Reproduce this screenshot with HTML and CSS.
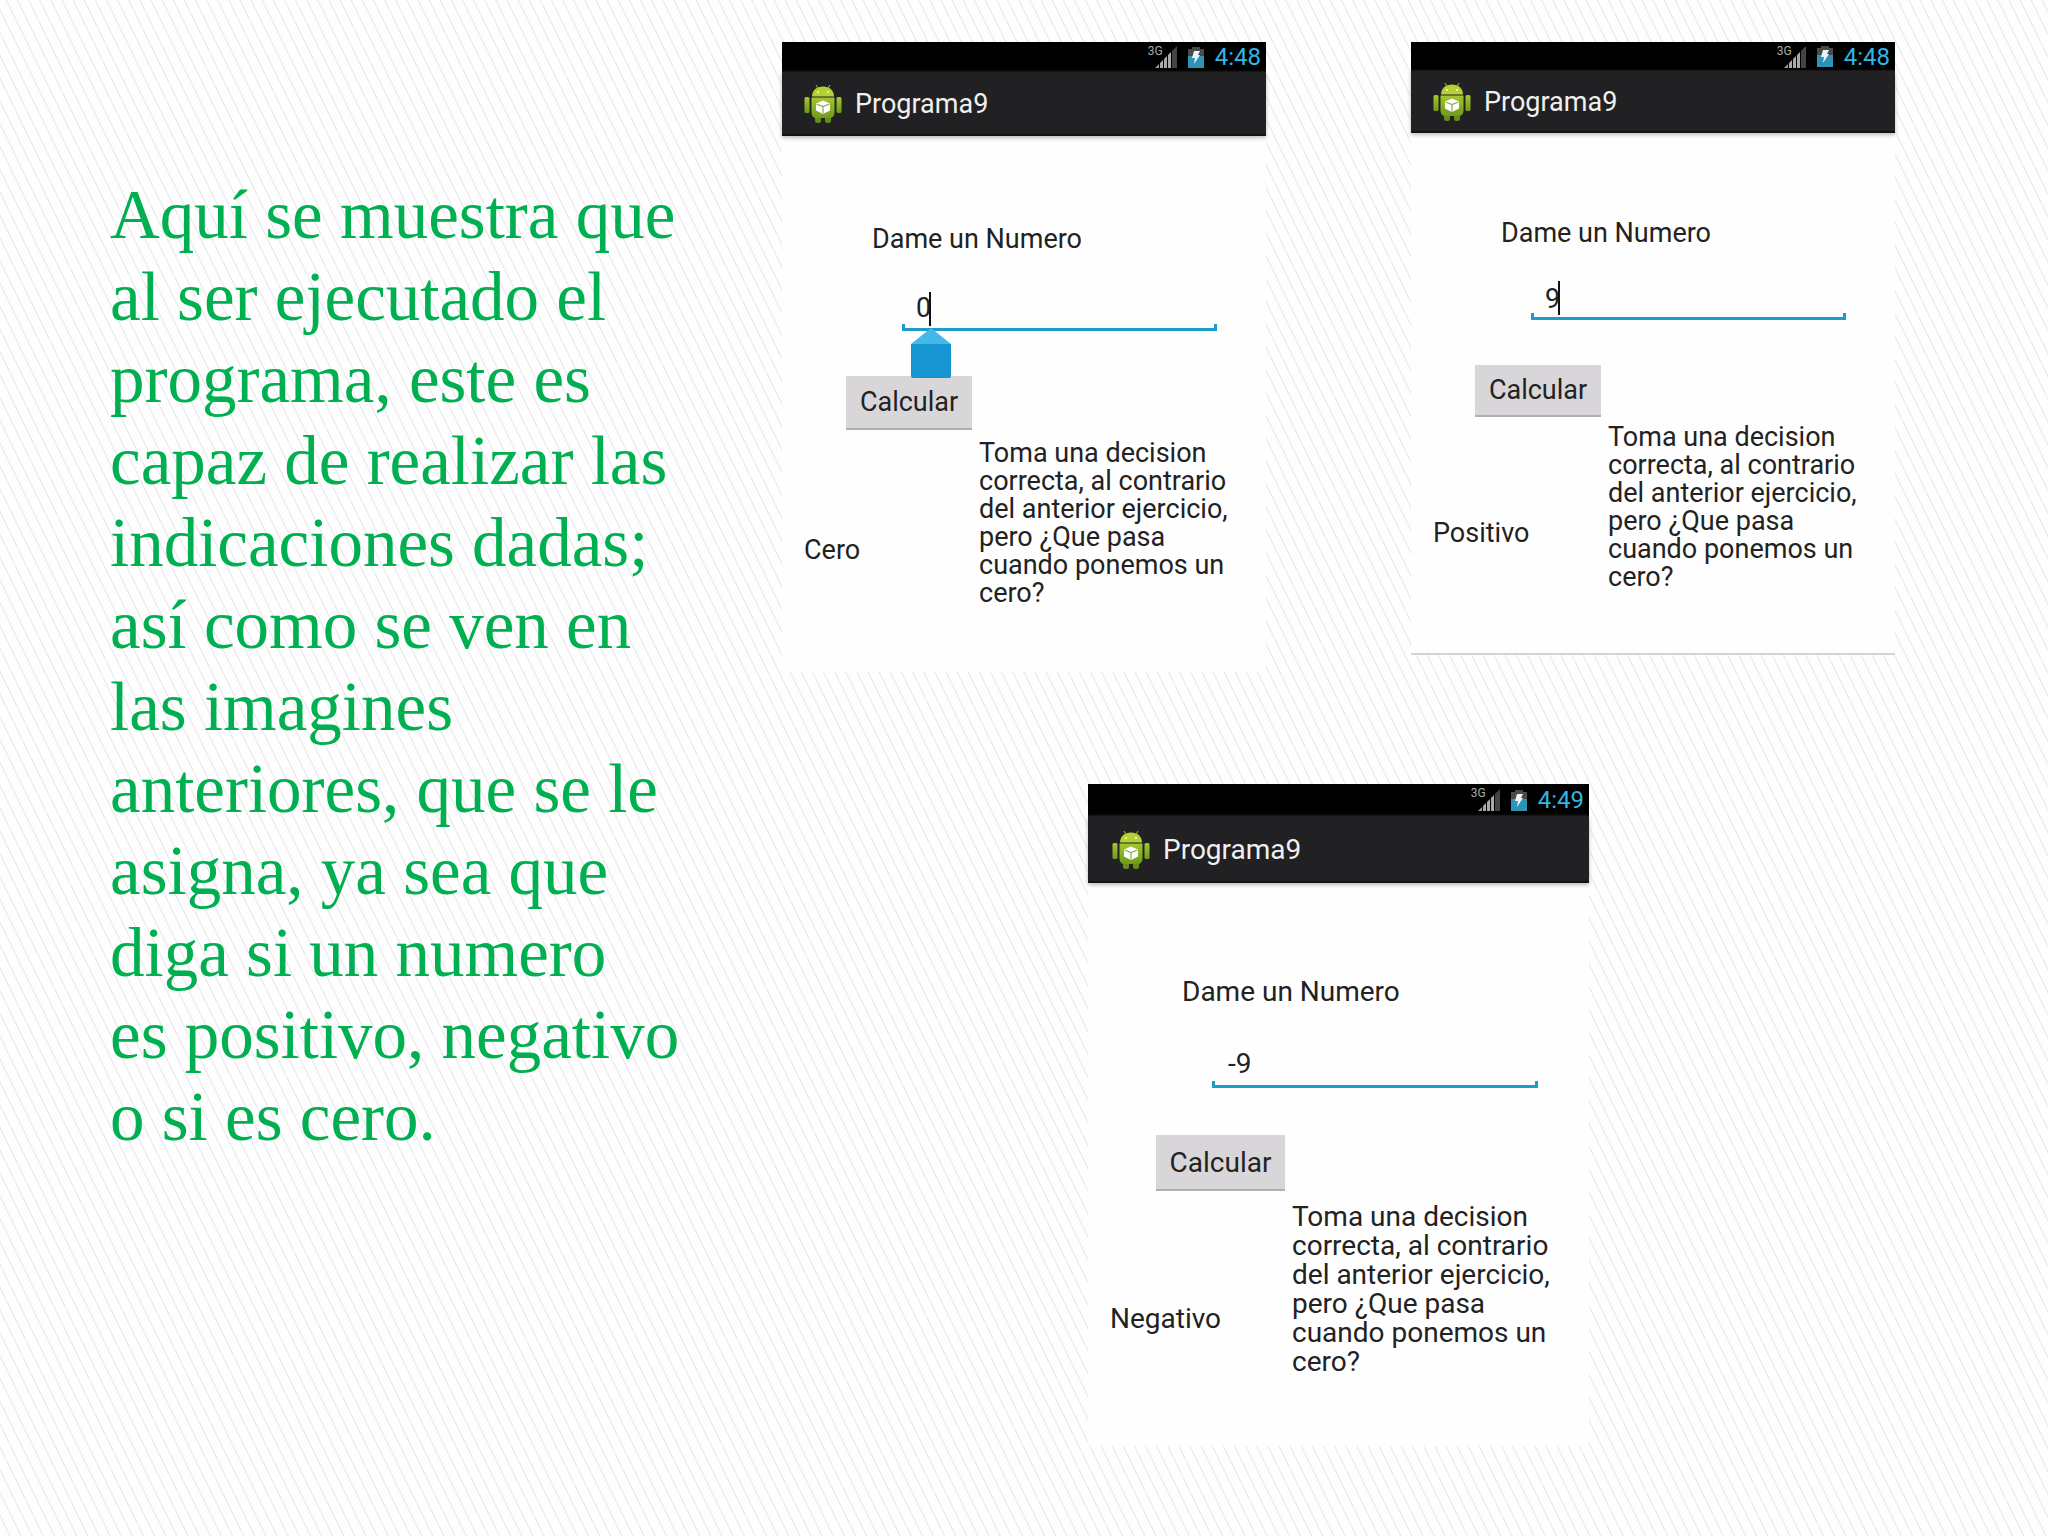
FILE: index.html
```html
<!DOCTYPE html>
<html lang="es">
<head>
<meta charset="UTF-8">
<meta name="viewport" content="width=device-width, initial-scale=1.0">
<title>Programa9</title>
<link rel="stylesheet" href="styles.css">
</head>
<body>

<!-- shared icons -->
<svg class="defs" width="0" height="0" aria-hidden="true">
  <defs>
    <linearGradient id="green" x1="0" y1="0" x2="0" y2="1">
      <stop offset="0" stop-color="#a5c532"/>
      <stop offset="1" stop-color="#6f9a1c"/>
    </linearGradient>
    <symbol id="robot" viewBox="0 0 38 40">
      <path d="M12 1l3 5M26 1l-3 5" stroke="#86a82a" stroke-width="1.2"/>
      <path d="M8 12.5C8 6 13 2.5 19 2.5S30 6 30 12.5z" fill="#b3d135"/>
      <circle cx="14" cy="8" r="1" fill="#f4f8dc"/>
      <circle cx="24" cy="8" r="1" fill="#f4f8dc"/>
      <rect x="0.5" y="13" width="5" height="16" rx="1.5" fill="url(#green)"/>
      <rect x="32.5" y="13" width="5" height="16" rx="1.5" fill="url(#green)"/>
      <rect x="11" y="31" width="6" height="8" rx="2.5" fill="#658d1b"/>
      <rect x="21" y="31" width="6" height="8" rx="2.5" fill="#658d1b"/>
      <path d="M7.5 13.5h23v14.5c0 4-2 6-5 6h-13c-3 0-5-2-5-6z" fill="url(#green)"/>
      <path d="M19 16.5l7 3v7l-7 3.5-7-3.5v-7z" fill="#fff"/>
      <path d="M12.5 20l6.5 2.5 6.5-2.5M19 22.5v7" fill="none" stroke="#8ba94f" stroke-width="1.2"/>
    </symbol>
    <symbol id="signal" viewBox="0 0 22 22">
      <path d="M0 22l4-4v4z" fill="#999"/>
      <path d="M5 17l3-3v8h-3z" fill="#aaa"/>
      <path d="M9 13l3-3v12h-3z" fill="#aaa"/>
      <path d="M13 9l3-3v16h-3z" fill="#aaa"/>
      <path d="M17 5l5-5v22h-5z" fill="#444"/>
    </symbol>
    <symbol id="battery" viewBox="0 0 16 21">
      <path d="M4 0h8v2h4v7H0V2h4z" fill="#4a4a4a"/>
      <path d="M0 9h16v12H0z" fill="#2f93b5"/>
      <path d="M6 4h6l-2 4h2l-6 9 1-6H4z" fill="#e8f6fb"/>
    </symbol>
  </defs>
</svg>

<main class="slide">
  <p class="description">Aquí se muestra que<br>
  al ser ejecutado el<br>
  programa, este es<br>
  capaz de realizar las<br>
  indicaciones dadas;<br>
  así como se ven en<br>
  las imagines<br>
  anteriores, que se le<br>
  asigna, ya sea que<br>
  diga si un numero<br>
  es positivo, negativo<br>
  o si es cero.</p>

  <div class="screens">
    <div class="row row-top">
      <section class="phone phone-zero">
        <div class="status">
          <span class="network">3G</span>
          <svg class="signal"><use href="#signal"/></svg>
          <svg class="battery"><use href="#battery"/></svg>
          <span class="clock">4:48</span>
        </div>
        <header class="titlebar">
          <svg class="robot"><use href="#robot"/></svg>
          <h2 class="title">Programa9</h2>
        </header>
        <div class="content">
          <label class="label" for="num1">Dame un Numero</label>
          <div class="field">
            <input class="number" id="num1" type="text" value="0">
            <span class="caret"></span>
            <svg class="handle" viewBox="0 0 40 50">
              <path d="M20 0L40 16H0z" fill="#45b8ea"/>
              <path d="M0 16h40v32q0 2-2 2H2q-2 0-2-2z" fill="#1794d2"/>
            </svg>
          </div>
          <button class="calc" type="button">Calcular</button>
          <div class="answer">
            <output class="result" for="num1">Cero</output>
            <p class="note">Toma una decision<br>correcta, al contrario<br>del anterior ejercicio,<br>pero ¿Que pasa<br>cuando ponemos un<br>cero?</p>
          </div>
        </div>
      </section>

      <section class="phone phone-positive">
        <div class="status">
          <span class="network">3G</span>
          <svg class="signal"><use href="#signal"/></svg>
          <svg class="battery"><use href="#battery"/></svg>
          <span class="clock">4:48</span>
        </div>
        <header class="titlebar">
          <svg class="robot"><use href="#robot"/></svg>
          <h2 class="title">Programa9</h2>
        </header>
        <div class="content">
          <label class="label" for="num2">Dame un Numero</label>
          <div class="field">
            <input class="number" id="num2" type="text" value="9">
            <span class="caret"></span>
          </div>
          <button class="calc" type="button">Calcular</button>
          <div class="answer">
            <output class="result" for="num2">Positivo</output>
            <p class="note">Toma una decision<br>correcta, al contrario<br>del anterior ejercicio,<br>pero ¿Que pasa<br>cuando ponemos un<br>cero?</p>
          </div>
        </div>
      </section>
    </div>

    <div class="row row-bottom">
      <section class="phone phone-negative">
        <div class="status">
          <span class="network">3G</span>
          <svg class="signal"><use href="#signal"/></svg>
          <svg class="battery"><use href="#battery"/></svg>
          <span class="clock">4:49</span>
        </div>
        <header class="titlebar">
          <svg class="robot"><use href="#robot"/></svg>
          <h2 class="title">Programa9</h2>
        </header>
        <div class="content">
          <label class="label" for="num3">Dame un Numero</label>
          <div class="field">
            <input class="number" id="num3" type="text" value="-9">
          </div>
          <button class="calc" type="button">Calcular</button>
          <div class="answer">
            <output class="result" for="num3">Negativo</output>
            <p class="note">Toma una decision<br>correcta, al contrario<br>del anterior ejercicio,<br>pero ¿Que pasa<br>cuando ponemos un<br>cero?</p>
          </div>
        </div>
      </section>
    </div>
  </div>
</main>

</body>
</html>
```
FILE: styles.css
```css
* {
  box-sizing: border-box;
}
body {
  margin: 0;
  min-height: 100vh;
  background: #fefefe repeating-linear-gradient(64deg, #fefefe 0px, #fefefe 8px, #e6e5e8 9px, #fefefe 10px);
  font-family: Roboto, "Liberation Sans", sans-serif;
  color: #222;
}
.defs {
  position: absolute;
}
.slide {
  display: grid;
  grid-template-columns: 672fr 1113fr 153fr;
  padding: 42px 0 0 110px;
}
.description {
  margin: 132px 0 0;
  font-family: "Liberation Serif", serif;
  font-size: 69px;
  line-height: 82px;
  color: #00b050;
  white-space: nowrap;
}
.screens {
  display: flex;
  flex-direction: column;
  gap: 112px;
}
.row {
  display: grid;
  align-items: start;
}
.row-top {
  grid-template-columns: 484fr 484fr;
  column-gap: 145px;
}
.row-bottom {
  grid-template-columns: 306fr 501fr 306fr;
}

/* phone screen, sizes differ a little per capture */
.phone {
  --line: 28px;
  --text: 27px;
  --status: 30px;
  --bar: 64px;
  --top: 89px;
  --field: 44px;
  --gap: 34px;
  --button: 54px;
  --button-gap: 45px;
  --note-gap: 9px;
  --result: 97px;
  --bottom: 65px;
  background: #fefefe;
  font-size: var(--text);
  line-height: var(--line);
}
.phone-positive {
  --status: 29px;
  --bar: 62px;
  --top: 86px;
  --field: 40px;
  --gap: 33px;
  --button: 52px;
  --note-gap: 6px;
  --result: 96px;
  --bottom: 62px;
  border-bottom: 2px solid #d5d3d7;
}
.phone-negative {
  --line: 29px;
  --text: 28px;
  --status: 32px;
  --bar: 67px;
  --top: 94px;
  --field: 46px;
  --gap: 36px;
  --button: 56px;
  --button-gap: 47px;
  --note-gap: 11px;
  --result: 102px;
  --bottom: 70px;
  grid-column: 2;
}
.status {
  display: flex;
  align-items: center;
  height: var(--status);
  padding-right: 5px;
  justify-content: flex-end;
  background: #000;
  color: #33b5e5;
}
.network {
  align-self: flex-start;
  margin-top: 2px;
  margin-right: -8px;
  font-size: 12px;
  line-height: 14px;
  color: #aaa;
}
.signal {
  width: 22px;
  height: 22px;
  margin-right: 11px;
}
.battery {
  width: 16px;
  height: 21px;
  margin-right: 11px;
}
.clock {
  font-size: 24px;
}
.titlebar {
  display: flex;
  align-items: center;
  gap: 13px;
  height: var(--bar);
  padding: 2px 0 0 22px;
  background: #212022;
  border-bottom: 2px solid #141214;
  box-shadow: 0 2px 4px #bbb;
}
.robot {
  width: 38px;
  height: 40px;
}
.title {
  margin: 0;
  font-size: var(--text);
  font-weight: 400;
  color: #f0f0f0;
}
.content {
  display: flex;
  flex-direction: column;
  align-items: flex-start;
  padding: var(--top) 0 var(--bottom);
}
.label {
  margin-left: 90px;
}
.field {
  position: relative;
  width: 65%;
  height: var(--field);
  margin: var(--gap) 0 0 120px;
  border-bottom: 3px solid #1b9dc8;
}
/* small upturned ends of the underline */
.field::after {
  content: "";
  position: absolute;
  left: 0;
  right: 0;
  bottom: 0;
  height: 4px;
  border: solid #1b9dc8;
  border-width: 0 3px;
}
.number {
  display: block;
  width: 100%;
  height: 100%;
  padding: 0 0 0 14px;
  border: 0;
  outline: 0;
  background: transparent;
  font: inherit;
  color: inherit;
}
.caret {
  position: absolute;
  left: 27px;
  bottom: 2px;
  width: 2px;
  height: 34px;
  background: #111;
}
.handle {
  position: absolute;
  left: 9px;
  top: 100%;
  width: 40px;
  height: 50px;
}
.calc {
  width: 126px;
  height: var(--button);
  margin: var(--button-gap) 0 var(--note-gap) 64px;
  padding: 0;
  border: 0;
  border-bottom: 2px solid #b0aeb1;
  background: #d8d6d9;
  font: inherit;
  color: inherit;
}
.answer {
  display: grid;
  grid-template-columns: 175px 1fr;
  padding-left: 22px;
}
.result {
  margin-top: var(--result);
}
.note {
  margin: 0;
  white-space: nowrap;
}
.phone-negative .titlebar {
  padding-left: 24px;
}
.phone-negative .label {
  margin-left: 94px;
}
.phone-negative .field {
  margin-left: 124px;
}
.phone-negative .number {
  padding-left: 16px;
}
.phone-negative .calc {
  width: 129px;
  margin-left: 68px;
}
.phone-negative .answer {
  grid-template-columns: 182px 1fr;
}
```
